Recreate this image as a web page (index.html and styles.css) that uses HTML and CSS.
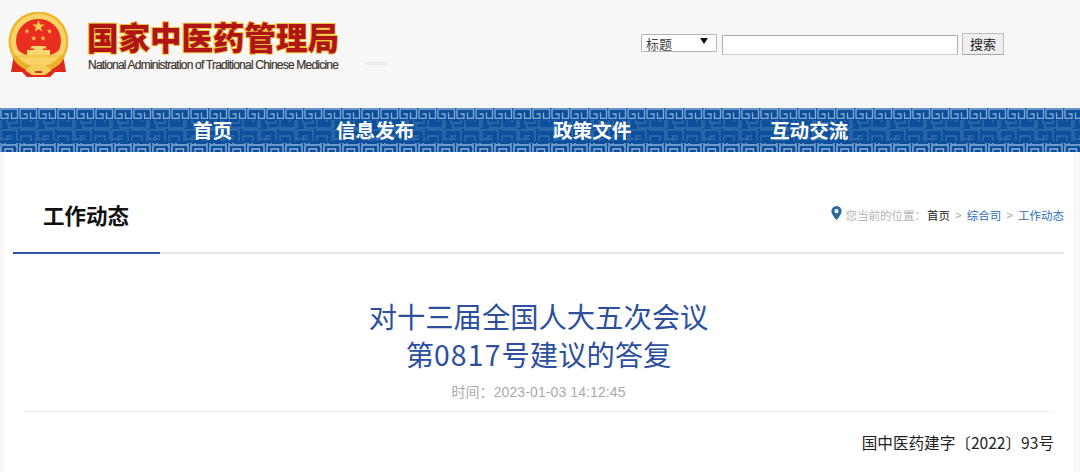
FILE: index.html
```html
<!DOCTYPE html>
<html lang="zh-CN">
<head>
<meta charset="utf-8">
<title>对十三届全国人大五次会议第0817号建议的答复</title>
<link rel="stylesheet" href="styles.css">
</head>
<body>
<header class="top">
  <div class="brand">
    <svg class="emblem" width="62" height="66" viewBox="0 0 62 66">
      <path d="M6 42 L3 60 L14 60 L19 65 L42 65 L47 60 L58 60 L55 42 Z" fill="#dd2a1c"/>
      <circle cx="30.5" cy="29.5" r="30" fill="#efb52e"/>
      <circle cx="30.5" cy="29.5" r="27.5" fill="#f8d468"/>
      <path d="M30.5 7 A22 22 0 0 1 51 38 Q46 43 40 43 H21 Q15 43 10 38 A22 22 0 0 1 30.5 7 Z" fill="#e92d20"/>
      <polygon fill="#f8d24c" points="30.5,8 32,12.5 36.7,12.5 32.9,15.3 34.3,19.8 30.5,17 26.7,19.8 28.1,15.3 24.3,12.5 29,12.5"/>
      <polygon fill="#f8d24c" points="19,16.5 19.7,18.4 21.7,18.4 20.1,19.6 20.7,21.5 19,20.3 17.3,21.5 17.9,19.6 16.3,18.4 18.3,18.4"/>
      <polygon fill="#f8d24c" points="41.5,16.5 42.2,18.4 44.2,18.4 42.6,19.6 43.2,21.5 41.5,20.3 39.8,21.5 40.4,19.6 38.8,18.4 40.8,18.4"/>
      <polygon fill="#f8d24c" points="25.8,23.5 26.5,25.4 28.5,25.4 26.9,26.6 27.5,28.5 25.8,27.3 24.1,28.5 24.7,26.6 23.1,25.4 25.1,25.4"/>
      <polygon fill="#f8d24c" points="35,23.5 35.7,25.4 37.7,25.4 36.1,26.6 36.7,28.5 35,27.3 33.3,28.5 33.9,26.6 32.3,25.4 34.3,25.4"/>
      <path d="M24 34 H37 L39 36.5 H35 V38 H42 V43 H19 V38 H26 V36.5 H22 Z" fill="#f8d76f"/>
      <rect x="12" y="43" width="37" height="2.5" fill="#f3c648"/>
      <path d="M8 43 Q16 54 30.5 55 Q45 54 53 43 L57 45 Q48 60 30.5 60 Q13 60 4 45 Z" fill="#ecaf2a"/>
      <path d="M21 55 L30.5 51 L40 55 L44 58 L37 63 H24 L17 58 Z" fill="#f6cf5a"/>
      <path d="M27 59 H34 V61 H27 Z" fill="#cf3a1e"/>
    </svg>
    <div class="brand-text">
      <div class="brand-cn">国家中医药管理局</div>
      <div class="brand-en">National Administration of Traditional Chinese Medicine</div>
    </div>
    <i class="ghost"></i>
  </div>
  <form class="search">
    <div class="select"><span>标题</span><i class="caret"></i></div>
    <div class="field"></div>
    <div class="btn">搜索</div>
  </form>
</header>

<nav class="nav">
  <svg class="nav-bg" width="1080" height="44" aria-hidden="true">
    <defs>
      <pattern id="key" width="19" height="11" patternUnits="userSpaceOnUse">
        <path d="M1 10.5 H8 V6 H4.5 M1 10.5 V1 H17.5 V10.5 H11.5 V4.5" fill="none" stroke="#86abd2" stroke-width="1.3"/>
      </pattern>
      <pattern id="mid" width="37" height="21" patternUnits="userSpaceOnUse">
        <path d="M1 20 V1 H17 V15 H7 V7 H12 M1 10 H12 M20 1 H36 V20 H21 V7 H31 V14 M9 15 V20 H30" fill="none" stroke="#2f6dae" stroke-width="1.4"/>
      </pattern>
      <pattern id="key2" width="19" height="9" patternUnits="userSpaceOnUse">
        <path d="M1 9 V1 H17 V9 M1 5 H0 M5 9 V5 H12.5 V8" fill="none" stroke="#8db1d6" stroke-width="1.3"/>
      </pattern>
    </defs>
    <rect width="1080" height="44" fill="#0e4f9c"/>
    <rect y="0" width="1080" height="11" fill="url(#key)"/>
    <rect y="12" width="1080" height="21" fill="url(#mid)"/>
    <rect y="35" width="1080" height="9" fill="url(#key2)"/>
  </svg>
  <ul class="nav-list">
    <li class="n1">首页</li>
    <li class="n2">信息发布</li>
    <li class="n3">政策文件</li>
    <li class="n4">互动交流</li>
  </ul>
</nav>

<main class="page">
  <div class="tabbar">
    <h2 class="tab">工作动态</h2>
    <div class="crumbs">
      <svg class="pin" width="11" height="14" viewBox="0 0 11 15"><path fill-rule="evenodd" fill="#2c6a9f" d="M5.5 0A5.5 5.5 0 0 0 0 5.5C0 9 5.5 15 5.5 15S11 9 11 5.5A5.5 5.5 0 0 0 5.5 0ZM5.5 3.3A2.2 2.2 0 1 1 5.5 7.7A2.2 2.2 0 0 1 5.5 3.3Z"/></svg>
      <span class="muted">您当前的位置：</span><span class="home">首页</span><span class="sep">&gt;</span><span class="link">综合司</span><span class="sep">&gt;</span><span class="link">工作动态</span>
    </div>
  </div>
  <article class="article">
    <h1 class="title">对十三届全国人大五次会议<br>第<span class="num">0817</span>号建议的答复</h1>
    <div class="meta">时间：2023-01-03 14:12:45</div>
    <p class="docno">国中医药建字〔2022〕93号</p>
  </article>
</main>
</body>
</html>
```
FILE: styles.css
```css
* { box-sizing: border-box; }
html, body { margin: 0; padding: 0; }
body {
  width: 1080px;
  height: 472px;
  overflow: hidden;
  background: #f7f7f7;
  font-family: "Liberation Sans", "Noto Sans CJK SC", sans-serif;
}
.top {
  height: 108px;
  display: flex;
  padding: 12px 76px 0 8px;
  justify-content: space-between;
}
.brand { display: flex; gap: 17px; height: 66px; }
.emblem { display: block; }
.brand-text { display: flex; flex-direction: column; padding-top: 7px; }
.ghost { width: 22px; height: 3px; margin: 50px 0 0 7px; background: #ececec; }
.brand-cn {
  font-family: "Noto Sans CJK SC", sans-serif;
  font-size: 31.5px;
  line-height: 34px;
  font-weight: 900;
  color: #b01515;
  -webkit-text-stroke: 2px #f4c33c;
  paint-order: stroke fill;
  white-space: nowrap;
  width: 252px;
}
.brand-en {
  font-size: 12px;
  line-height: 14px;
  margin-top: 5px;
  margin-left: 1px;
  letter-spacing: -0.79px;
  color: #3d332b;
  -webkit-text-stroke: 0.2px #3d332b;
  white-space: nowrap;
  width: 252px;
}
.search { display: flex; align-items: flex-start; height: 44px; margin: 0; padding-top: 21px; font-family: "Noto Sans CJK SC", sans-serif; }
.select {
  width: 76px; height: 18px; background: #fff; border: 1px solid #b5b5b5; border-radius: 1px;
  display: flex; align-items: center; justify-content: space-between;
  padding: 0 4px; font-size: 13px; color: #444; margin-top: 1px; margin-right: 5px;
}
.caret { width: 0; height: 0; border: 4px solid transparent; border-top: 6px solid #111; border-bottom: 0; margin-bottom: 4px; margin-right: 4px; }
.field { width: 236px; height: 20px; background: #fff; border: 1px solid #adadad; border-bottom-color: #ccc; margin-top: 2px; margin-right: 4px; }
.btn {
  width: 42px; height: 22px; background: #eee; border: 1px solid #bdbdbd;
  border-bottom-color: #a8a8a8;
  font-size: 13px; line-height: 20px; text-align: center; color: #222;
}
.nav { position: relative; height: 44px; }
.nav-bg { position: absolute; left: 0; top: 0; display: block; }
.nav-list {
  position: relative; list-style: none; margin: 0; padding: 0 0 2px 193px;
  display: flex; height: 44px; align-items: center;
  font-family: "Noto Sans CJK SC", sans-serif;
  font-size: 19.6px; font-weight: 700; color: #fff;
  white-space: nowrap;
}
.n1 { width: 143px; }
.n2 { width: 217px; }
.n3 { width: 217px; }
.page {
  margin: 0 6px 0 4px;
  background: #fff;
  height: 320px;
  padding: 0 10px 0 9px;
}
.tabbar {
  height: 102px;
  display: flex; justify-content: space-between; align-items: center;
  border-bottom: 2px solid #e6e6e6;
  position: relative;
  padding: 25px 0 0 0;
}
.tabbar::after {
  content: ""; position: absolute; left: 0; bottom: -2px; width: 147px; height: 2px; background: #2c54a4;
}
.tab {
  margin: 0 0 0 30px;
  font-family: "Noto Sans CJK SC", sans-serif;
  font-size: 21.5px; line-height: 30px; font-weight: 700; color: #111;
}
.crumbs {
  display: flex; align-items: center;
  font-family: "Noto Sans CJK SC", sans-serif;
  font-size: 11.5px; line-height: 16px; white-space: nowrap;
}
.pin { margin: 0 4px 3px 0; }
.muted { color: #b5b5b5; margin-right: 1px; }
.home { color: #222; }
.sep { color: #aaa; margin: 0 5px; font-family: "Liberation Sans", sans-serif; }
.link { color: #2c6bb5; }
.article { margin: 0 10px; }
.title {
  margin: 43px 0 0;
  font-family: "Noto Sans CJK SC", sans-serif;
  font-size: 28.3px; line-height: 38px; font-weight: 400;
  color: #2c4f9e; text-align: center;
}
.num { letter-spacing: 1.2px; }
.meta {
  margin-top: 9px; padding-bottom: 9px;
  text-align: center; font-size: 14px; line-height: 20px; color: #aaa;
  letter-spacing: 0.1px;
  border-bottom: 1px solid #eee;
}
.docno {
  margin: 19px 0 0; text-align: right;
  font-family: "Noto Sans CJK SC", sans-serif;
  font-size: 15.6px; line-height: 22px; color: #222;
}
```
